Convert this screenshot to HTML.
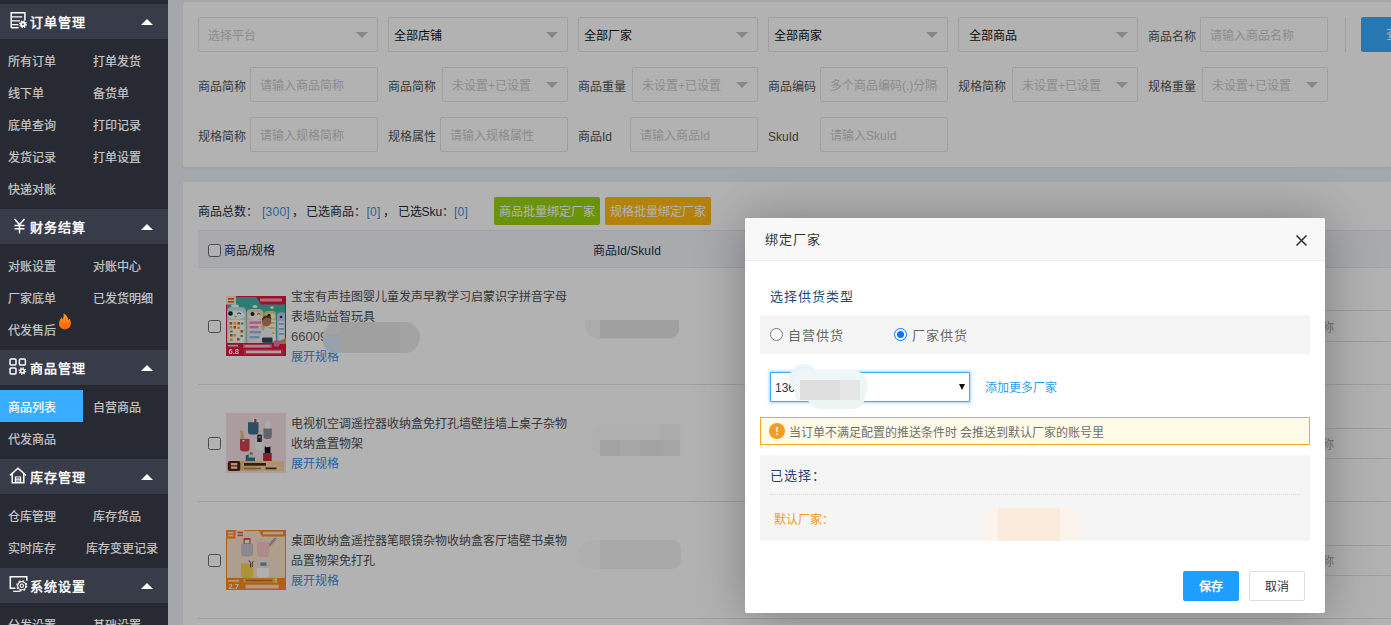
<!DOCTYPE html>
<html lang="zh-CN">
<head>
<meta charset="utf-8">
<title>商品列表</title>
<style>
*{box-sizing:border-box;margin:0;padding:0}
html,body{width:1391px;height:625px;overflow:hidden}
body{position:relative;background:#ebf1f6;font-family:"Liberation Sans",sans-serif;font-size:12px;color:#555}
.abs{position:absolute}
/* ---------- sidebar ---------- */
#side{position:absolute;left:0;top:0;width:168px;height:625px;background:#272933;z-index:50;overflow:hidden}
.sh{position:absolute;left:0;width:168px;height:35px;background:#383b48;color:#fff;font-size:14px;-webkit-text-stroke:.45px #fff;line-height:37px}
.sh span{position:absolute;left:29.500px;top:0;white-space:nowrap;font-size:13px;letter-spacing:1px}
.sh svg{position:absolute}
.sh i{position:absolute;left:141px;top:15px;width:0;height:0;border-left:6px solid transparent;border-right:6px solid transparent;border-bottom:6px solid #fff}
.si{position:absolute;height:32px;line-height:36px;-webkit-text-stroke:.2px #c9c9c9;color:#c9c9c9;font-size:12px;white-space:nowrap}
.si.c1{left:8px}.si.c2{left:93px}
.si.act{left:0;width:83px;padding-left:8px;background:#38adff;color:#fff;-webkit-text-stroke:.2px #fff}
/* ---------- main ---------- */
#main{position:absolute;left:168px;top:0;width:1223px;height:625px;overflow:hidden}
.panel{position:absolute;background:#fff;border-radius:2px}
.lab{position:absolute;height:35px;line-height:40px;color:#555;font-size:12px;white-space:nowrap}
.inp{position:absolute;height:35px;border:1px solid #e6e6e6;border-radius:2px;background:#fff;line-height:37px;padding-left:9px;color:#cacaca;font-size:12px;white-space:nowrap;overflow:hidden}
.inp.v{color:#111;padding-left:5px}
.inp.s:after{content:"";position:absolute;right:9px;top:14px;border-left:6px solid transparent;border-right:6px solid transparent;border-top:6px solid #c2c2c2}
.tb{top:197px;height:28px;line-height:31px;color:#1c2a44;white-space:nowrap}
.tb.b{color:#3a8ee6;letter-spacing:.25px}
.btn{position:absolute;top:197px;width:106px;height:28px;line-height:30px;border-radius:2px;color:#fff;font-size:12px;text-align:center;white-space:nowrap}
.th{height:38px;line-height:42px;color:#1f2d4d;font-size:12px;white-space:nowrap}
.cb{position:absolute;width:13px;height:13px;border:1px solid #6b6b6b;border-radius:2.500px;background:#fff}
.pt{margin-top:1px;line-height:20px;color:#505050;font-size:12px;white-space:nowrap}
.lk{color:#3a8ee6}
.hl{left:30px;width:1285px;height:1px;background:#e1e4ee}
.rl{left:1150px;width:80px;height:1px;background:#e2e4ea}
.rc{left:1154px;height:16px;line-height:20px;color:#a6a6a6;font-size:12px}
#shade{position:absolute;left:168px;top:0;width:1223px;height:625px;background:#000;opacity:.3;z-index:60}
#dlg{position:absolute;left:745px;top:218px;width:580px;height:395px;background:#fff;border-radius:2px;box-shadow:1px 1px 50px rgba(0,0,0,.3);z-index:70}
.rd{width:13px;height:13px;border:1px solid #767676;border-radius:7px;background:#fff}
.rd.on{border-color:#0075ff}
.rd.on:after{content:"";position:absolute;left:2px;top:2px;width:7px;height:7px;border-radius:4px;background:#0075ff}
.rt{height:39px;line-height:42px;font-size:13px;letter-spacing:1px;color:#666;white-space:nowrap}
</style>
</head>
<body>

<div id="side">
  <div class="sh" style="top:4px"><svg style="left:10px;top:8px" width="18" height="18" viewBox="0 0 18 18" fill="none" stroke="#fff" stroke-width="1.5"><path d="M1.2 15.7V.75h13.700v7.800"/><path d="M1.2 15.700h7.400"/><path d="M1.500 4.900h10.800M1.500 8.800h8.500M1.500 12.600h7" stroke-width="1.300"/><circle cx="13" cy="12.200" r="1.900" stroke-width="1.900"/><circle cx="13" cy="12.200" r="3.300" stroke-width="1.300" stroke-dasharray="1.300 1.292"/></svg><span>订单管理</span><i></i></div>
  <div class="si c1" style="top:44px">所有订单</div><div class="si c2" style="top:44px">打单发货</div>
  <div class="si c1" style="top:76px">线下单</div><div class="si c2" style="top:76px">备货单</div>
  <div class="si c1" style="top:108px">底单查询</div><div class="si c2" style="top:108px">打印记录</div>
  <div class="si c1" style="top:140px">发货记录</div><div class="si c2" style="top:140px">打单设置</div>
  <div class="si c1" style="top:172px">快递对账</div>

  <div class="sh" style="top:209px"><svg style="left:13px;top:9px" width="13" height="16" viewBox="0 0 13 16" fill="none" stroke="#fff" stroke-width="1.5"><path d="M1.5 1l5 5.6 5-5.6M6.5 6.6V15.5M1.5 7.4h10M1.5 10.8h10"/></svg><span>财务结算</span><i></i></div>
  <div class="si c1" style="top:249px">对账设置</div><div class="si c2" style="top:249px">对账中心</div>
  <div class="si c1" style="top:281px">厂家底单</div><div class="si c2" style="top:281px">已发货明细</div>
  <div class="si c1" style="top:313px">代发售后</div>
  <svg class="abs" style="left:59px;top:312.500px" width="13" height="17" viewBox="0 0 13 17"><defs><linearGradient id="fg" x1="0" y1="0" x2="0" y2="1"><stop offset="0" stop-color="#ffa42a"/><stop offset=".55" stop-color="#ff7a16"/><stop offset="1" stop-color="#ff5e0e"/></linearGradient></defs><path d="M4.500 .300C7.500 2 9 4.500 9.300 7c.500-.500.900-1 1.100-1.600 1.100 1.600 1.500 3.600 1.500 5.200 0 3.400-2.700 5.800-6 5.800S0 14 0 10.800c0-2.300 1.200-4.300 2.400-6.600.400 1 .800 1.600 1.500 2 .700-2 1-4 .600-5.900z" fill="url(#fg)"/></svg>

  <div class="sh" style="top:350px"><svg style="left:9px;top:8px" width="18" height="17" viewBox="0 0 18 17" fill="none" stroke="#fff" stroke-width="1.5"><rect x="1" y="1" width="6" height="6" rx="1"/><rect x="10.400" y="1" width="6" height="6" rx="1"/><rect x="1" y="10" width="6" height="6" rx="1"/><circle cx="13.400" cy="13" r="1.900" stroke-width="1.500"/><circle cx="13.400" cy="13" r="3.200" stroke-width="1.300" stroke-dasharray="1.200 1.310"/></svg><span>商品管理</span><i></i></div>
  <div class="si act" style="top:390px">商品列表</div><div class="si c2" style="top:390px">自营商品</div>
  <div class="si c1" style="top:422px">代发商品</div>

  <div class="sh" style="top:459px"><svg style="left:9px;top:8px" width="18" height="17" viewBox="0 0 18 17" fill="none" stroke="#fff" stroke-width="1.500"><path d="M1 8.400L9 1.200l8 7.200"/><path d="M3.200 7v8.800h11.600V7"/><path d="M6.400 15.400v-5.400h5.200v5.400M6.400 12.200h5.200M6.400 14h5.200" stroke-width="1.200"/></svg><span>库存管理</span><i></i></div>
  <div class="si c1" style="top:499px">仓库管理</div><div class="si c2" style="top:499px">库存货品</div>
  <div class="si c1" style="top:531px">实时库存</div><div class="si" style="left:86px;top:531px">库存变更记录</div>

  <div class="sh" style="top:568px"><svg style="left:9px;top:7px" width="20" height="18" viewBox="0 0 20 18" fill="none" stroke="#fff" stroke-width="1.500"><path d="M6.500 13.300H1.300V1.800h16.500v4"/><path d="M4 16.300h7.500" stroke-width="1.200"/><circle cx="12.800" cy="10.700" r="5" stroke-width="1.100" stroke-dasharray="1.900 2.027"/><circle cx="12.800" cy="10.700" r="4.100" stroke-width="1.100"/><circle cx="12.800" cy="10.700" r="1.700" stroke-width="1.100"/></svg><span>系统设置</span><i></i></div>
  <div class="si c1" style="top:608px">分发设置</div><div class="si c2" style="top:608px">基础设置</div>
</div>

<div id="main">
  <!-- filter panel : coords relative to #main (x-168) -->
  <div class="panel" style="left:15px;top:2px;width:1300px;height:165px;box-shadow:0 1px 2px rgba(0,0,0,.05)"></div>

  <!-- row 1 -->
  <div class="inp s" style="left:30px;top:17px;width:180px">选择平台</div>
  <div class="inp s v" style="left:220px;top:17px;width:180px">全部店铺</div>
  <div class="inp s v" style="left:410px;top:17px;width:180px">全部厂家</div>
  <div class="inp s v" style="left:600px;top:17px;width:180px">全部商家</div>
  <div class="inp s v" style="left:790px;top:17px;width:180px;padding-left:10px">全部商品</div>
  <div class="lab" style="left:980px;top:17px">商品名称</div>
  <div class="inp" style="left:1032px;top:17px;width:128px">请输入商品名称</div>
  <div class="abs" style="left:1177px;top:17px;width:1px;height:35px;background:#e6e6e6"></div>
  <div class="abs" style="left:1193px;top:17px;width:60px;height:35px;background:#38adff;border-radius:2px;color:#fff;font-size:14px;line-height:35px;padding-left:25px;white-space:nowrap">查询</div>

  <!-- row 2 -->
  <div class="lab" style="left:30px;top:67px">商品简称</div>
  <div class="inp" style="left:82px;top:67px;width:128px">请输入商品简称</div>
  <div class="lab" style="left:220px;top:67px">商品简称</div>
  <div class="inp s" style="left:274px;top:67px;width:126px">未设置+已设置</div>
  <div class="lab" style="left:410px;top:67px">商品重量</div>
  <div class="inp s" style="left:464px;top:67px;width:126px">未设置+已设置</div>
  <div class="lab" style="left:600px;top:67px">商品编码</div>
  <div class="inp" style="left:652px;top:67px;width:128px">多个商品编码(,)分隔</div>
  <div class="lab" style="left:790px;top:67px">规格简称</div>
  <div class="inp s" style="left:844px;top:67px;width:126px">未设置+已设置</div>
  <div class="lab" style="left:980px;top:67px">规格重量</div>
  <div class="inp s" style="left:1034px;top:67px;width:126px">未设置+已设置</div>

  <!-- row 3 -->
  <div class="lab" style="left:30px;top:117px">规格简称</div>
  <div class="inp" style="left:82px;top:117px;width:128px">请输入规格简称</div>
  <div class="lab" style="left:220px;top:117px">规格属性</div>
  <div class="inp" style="left:272px;top:117px;width:128px">请输入规格属性</div>
  <div class="lab" style="left:410px;top:117px">商品Id</div>
  <div class="inp" style="left:462px;top:117px;width:128px">请输入商品Id</div>
  <div class="lab" style="left:600px;top:117px">SkuId</div>
  <div class="inp" style="left:652px;top:117px;width:128px">请输入SkuId</div>


  <!-- table panel : coords relative to #main (x-168) -->
  <div class="panel" style="left:15px;top:182px;width:1300px;height:460px"></div>
  <div class="abs tb" style="left:30px">商品总数：</div><div class="abs tb b" style="left:94px">[300]</div><div class="abs tb" style="left:124px">，</div>
  <div class="abs tb" style="left:138px">已选商品：</div><div class="abs tb b" style="left:198.500px">[0]</div><div class="abs tb" style="left:215px">，</div>
  <div class="abs tb" style="left:229.500px">已选Sku：</div><div class="abs tb b" style="left:286px">[0]</div>
  <div class="btn" style="left:326px;background:#9ad30e">商品批量绑定厂家</div>
  <div class="btn" style="left:437px;background:#ffbb10">规格批量绑定厂家</div>

  <div class="abs" style="left:30px;top:230px;width:1285px;height:38px;background:#f2f4fa;border-top:1px solid #e6e9f0;border-bottom:1px solid #e6e9f0"></div>
  <div class="cb" style="left:40px;top:244px"></div>
  <div class="abs th" style="left:56px;top:230px">商品/规格</div>
  <div class="abs th" style="left:425px;top:230px">商品Id/SkuId</div>

  <!-- row 1 : 268-384 -->
  <div class="cb" style="left:40px;top:320px"></div>
  <svg class="abs" style="left:58px;top:296px" width="60" height="60" viewBox="0 0 60 60">
    <defs><filter id="bl" x="-5%" y="-5%" width="110%" height="110%"><feGaussianBlur stdDeviation=".45"/></filter><clipPath id="cp"><rect width="60" height="60"/></clipPath></defs>
    <g clip-path="url(#cp)"><g filter="url(#bl)">
    <rect x="-2" y="-2" width="64" height="64" fill="#e3163f"/>
    <rect x="1" y="1" width="58" height="47" fill="#43b2a3"/>
    <path d="M29 -1h32v9.500H35z" fill="#e3163f"/>
    <rect x="34" y="2.500" width="22" height="3" fill="#f4a3b3"/>
    <rect x="0" y="0" width="10" height="8.500" fill="#fbe6c6"/><rect x="2" y="2" width="6" height="1.600" fill="#e0563c"/><rect x="2" y="5" width="6" height="1.600" fill="#e0563c"/>
    <ellipse cx="9" cy="10" rx="4" ry="1.800" fill="#eef8f6"/><ellipse cx="29" cy="10.500" rx="2.500" ry="1.500" fill="#eef8f6"/><ellipse cx="46" cy="11.500" rx="2" ry="1.200" fill="#eef8f6"/>
    <path d="M1 48V16q0-5 5-5h9q5 0 5 5v32z" fill="#bfe2ee"/>
    <path d="M20.500 48V18q0-5 4.500-5h8q4.500 0 4.500 5v30z" fill="#f6d6b6"/>
    <path d="M38 46V19q0-4 3.500-4h5q3.500 0 3.500 4v27z" fill="#f2d36a"/>
    <path d="M51 45V20q0-3.500 3-3.500h5V45z" fill="#b5d0ee"/>
    <ellipse cx="10.500" cy="19" rx="8.500" ry="4.500" fill="#f4fbfd"/>
    <ellipse cx="29" cy="20" rx="7" ry="4" fill="#fdf3ea"/>
    <ellipse cx="44.500" cy="20.500" rx="4.500" ry="3" fill="#fdf7df"/>
    <circle cx="4.500" cy="17.500" r="2.300" fill="#1d1d22"/><path d="M11 18q2-2.500 4 0" stroke="#333" stroke-width=".9" fill="none"/><path d="M8 20l1.500 2 1.500-2z" fill="#f2a93b"/>
    <circle cx="26.500" cy="18" r="2" fill="#1d1d22"/><path d="M31 18.500q1.700-2 3.400 0" stroke="#333" stroke-width=".8" fill="none"/>
    <circle cx="43" cy="19.500" r="1.700" fill="#1d1d22"/><circle cx="55" cy="21" r="1.300" fill="#333"/>
    <rect x="2.500" y="24" width="16" height="23.500" fill="#fcfcf4"/>
    <rect x="22.500" y="24" width="13.500" height="23" fill="#fbe4f0"/>
    <rect x="39.500" y="24" width="10" height="21" fill="#fcf9e2"/>
    <rect x="52.500" y="25" width="6" height="19" fill="#eef4fb"/>
    <g fill="#e5533f"><rect x="3.500" y="26" width="2.600" height="2.600"/><rect x="11.500" y="26" width="2.600" height="2.600"/><rect x="7.500" y="30" width="2.600" height="2.600"/><rect x="14.500" y="34" width="2.600" height="2.600"/><rect x="4" y="38" width="2.600" height="2.600"/><rect x="11" y="42" width="2.600" height="2.600"/></g>
    <g fill="#f1b32e"><rect x="7.500" y="26" width="2.600" height="2.600"/><rect x="3.500" y="30" width="2.600" height="2.600"/><rect x="11.500" y="30.500" width="2.600" height="2.600"/><rect x="7.500" y="38" width="2.600" height="2.600"/><rect x="4" y="42.500" width="2.600" height="2.600"/></g>
    <g fill="#5bb04f"><rect x="15" y="26.500" width="2.400" height="2"/><rect x="4" y="34.500" width="2.600" height="2"/><rect x="14.500" y="39" width="2.400" height="2"/></g>
    <g fill="#ef84b5"><rect x="23.500" y="25.500" width="11.500" height="2.400"/><rect x="23.500" y="30" width="9" height="2.400"/></g>
    <g fill="#84c3ea"><rect x="23.500" y="35" width="11.500" height="2.400"/><rect x="23.500" y="40" width="10" height="2.400"/></g>
    <g fill="#f2c86a"><rect x="40.500" y="26" width="8" height="2"/><rect x="40.500" y="31" width="8" height="2"/><rect x="40.500" y="36" width="8" height="2"/></g>
    <g fill="#8fb5e6"><rect x="53" y="27" width="5" height="1.800"/><rect x="53" y="32" width="5" height="1.800"/><rect x="53" y="37" width="5" height="1.800"/></g>
    <path d="M47 48l13-6v6z" fill="#c99b69"/>
    <ellipse cx="40.500" cy="25.500" rx="4.800" ry="5" fill="#b9805f"/><path d="M36 25q0-5.500 5-5.500 4.500 0 4.500 4-3-2.500-6-1.500-2 1-3.500 3z" fill="#6b3f2a"/>
    <path d="M34.500 45q0-14 6-14 6.500 0 6.500 14z" fill="#eef1f5"/><path d="M37.500 35l-3-5 1.200-.8 3 4z" fill="#e9c3a6"/>
    <rect x="36" y="41.500" width="10.500" height="5" rx="1" fill="#3c4252"/>
    <circle cx="50.500" cy="47.500" r="3.300" fill="#ef6fa5"/>
    <rect x="-1" y="47" width="49" height="14" fill="#e3163f"/><rect x="47" y="51" width="14" height="10" fill="#e3163f"/>
    <rect x="2" y="48.800" width="10" height="1.800" fill="#f7b4c0"/>
    <rect x="17" y="48.300" width="29" height="3.700" fill="#f06683"/><rect x="19" y="49.200" width="25" height="1.900" fill="#f9c9d3"/>
    <rect x="18" y="53.300" width="39" height="5" fill="#ea3f60"/><rect x="20" y="54.600" width="35" height="2.600" fill="#fbe3e8"/>
    <text x="2.500" y="58.300" font-family="Liberation Sans, sans-serif" font-size="7.500" font-weight="bold" fill="#fff">6.8</text>
    </g></g>
  </svg>
  <div class="abs pt" style="left:123px;top:286px">宝宝有声挂图婴儿童发声早教学习启蒙识字拼音字母<br>表墙贴益智玩具<br><span style="color:#666;font-size:13px">66009</span><br><span class="lk">展开规格</span></div>
  <div class="abs" style="left:154.500px;top:322px;width:97px;height:31px;border-radius:14px 16px 16px 12px;background:#eaeaea"></div>
  <div class="abs" style="left:154.500px;top:334px;width:18px;height:19px;border-radius:6px 0 0 12px;background:#d9e5f6"></div>
  <div class="abs" style="left:172px;top:322px;width:60px;height:31px;background:#e5e5e5"></div>
  <div class="abs" style="left:417px;top:320px;width:94px;height:18.500px;border-radius:0 0 10px 14px;background:#f5f5f5"></div>
  <div class="abs" style="left:431.500px;top:320px;width:79.500px;height:18px;border-radius:0 0 9px 0;background:#e6e6e6"></div>
  <div class="abs hl" style="top:384px"></div>

  <!-- row 2 : 385-501 -->
  <div class="cb" style="left:40px;top:437px"></div>
  <svg class="abs" style="left:58px;top:413px" width="60" height="60" viewBox="0 0 60 60">
    <g clip-path="url(#cp)"><g filter="url(#bl)">
    <rect x="-2" y="-2" width="64" height="64" fill="#f5e1e4"/>
    <rect x="26.500" y="5" width="2" height="7" rx=".8" fill="#fafafa"/><rect x="28.300" y="6" width="2" height="5" rx=".6" fill="#cf2a3f"/><path d="M31 11.500l3.200-6 .9.600-2.600 6z" fill="#f4f4f4"/>
    <path d="M22 9.300h10.500v9.200q0 3-3 3h-4.500q-3 0-3-3z" fill="#3d6f8b"/>
    <ellipse cx="41.800" cy="12.500" rx="2.600" ry="5.300" fill="#f6f6f7"/>
    <path d="M37.400 15.600h8.400v7.400q0 3-3 3h-2.400q-3 0-3-3z" fill="#8c8e9c"/>
    <path d="M14.300 17l3 1.500 1.500 10h-4.500z" fill="#dfc08a"/>
    <path d="M14 26h9.500v9.400q0 3-3 3h-3.500q-3 0-3-3z" fill="#cf4252"/><rect x="16.500" y="27" width="2" height="1.500" fill="#f3f3f3"/>
    <rect x="31.200" y="21.400" width="4.600" height="8" rx="1" fill="#2b2b31"/><rect x="32.300" y="23" width="2.400" height="2.400" fill="#8d8d95"/>
    <path d="M29.400 29h8.200v5.600q0 2.800-2.800 2.800h-2.600q-2.800 0-2.800-2.800z" fill="#f2f2f4"/>
    <rect x="38.700" y="33" width="5.700" height="9" rx=".8" fill="#111114"/><rect x="39.500" y="32.400" width="4.200" height="1.700" fill="#f1f1f1"/>
    <path d="M37.100 40h8.600v8h-8.600z" fill="#c32f3d"/>
    <rect x="22.700" y="38" width="5.100" height="6.500" rx=".6" fill="#e9e3d4"/><rect x="23.800" y="39.500" width="3" height="2" fill="#7c8088"/>
    <path d="M19.700 42.500l3-1.300v3.300h6.300v4H19.700z" fill="#3d6f8b"/>
    <rect x="1.800" y="47.900" width="56.100" height="10" rx="2" fill="#f3c48b"/><rect x="30" y="47.900" width="27.900" height="10" rx="2" fill="#f7d3a3"/>
    <rect x="1.800" y="47.900" width="12.500" height="10" rx="2.200" fill="#57200c"/>
    <rect x="4.800" y="50" width="6.500" height="2.400" fill="#f3d7b0"/><rect x="4.800" y="53.400" width="6.500" height="2.400" fill="#f3d7b0"/>
    <rect x="18" y="50" width="22" height="2.700" fill="#4a2a18"/>
    <rect x="18" y="54.700" width="17" height="1.500" fill="#a07c54"/><rect x="39.500" y="54.500" width="11" height="1.800" fill="#57331b"/>
    </g></g>
  </svg>
  <div class="abs pt" style="left:123px;top:413px">电视机空调遥控器收纳盒免打孔墙壁挂墙上桌子杂物<br>收纳盒置物架<br><span class="lk">展开规格</span></div>
  <div class="abs" style="left:423px;top:424px;width:89.500px;height:32px;border-radius:15px 0 0 15px;background:#fcfcfc"></div>
  <div class="abs" style="left:492px;top:424px;width:20px;height:16px;background:#f6f6f6"></div>
  <div class="abs" style="left:432px;top:440px;width:20px;height:16px;background:#e9e9e7"></div><div class="abs" style="left:452px;top:440px;width:20px;height:16px;background:#efefef"></div>
  <div class="abs" style="left:472px;top:440px;width:20px;height:16px;background:#e9e9e9"></div><div class="abs" style="left:492px;top:440px;width:20px;height:16px;background:#ededed"></div>
  <div class="abs hl" style="top:501px"></div>

  <!-- row 3 : 502-618 -->
  <div class="cb" style="left:40px;top:554px"></div>
  <svg class="abs" style="left:58px;top:530px" width="60" height="60" viewBox="0 0 60 60">
    <g clip-path="url(#cp)"><g filter="url(#bl)">
    <rect x="-2" y="-2" width="64" height="64" fill="#ff8a1f"/>
    <rect x="1" y="1" width="58" height="47.500" fill="#fbe2cc"/>
    <rect x="-1" y="-1" width="10.500" height="9.500" fill="#ff8a1f"/><rect x="2" y="2" width="5.500" height="1.600" fill="#ffe6c9"/><rect x="2" y="4.800" width="5.500" height="1.600" fill="#ffe6c9"/>
    <rect x="10" y="0" width="8.500" height="8" fill="#ffe8c6"/><rect x="11.500" y="1.800" width="5.500" height="1.600" fill="#e8573c"/><rect x="11.500" y="4.600" width="5.500" height="1.600" fill="#e8573c"/>
    <path d="M32 -1h29v7.500H36z" fill="#ff8a1f"/><rect x="37" y="1.800" width="20" height="2.600" fill="#ffe1c0"/>
    <rect x="17.500" y="7.900" width="7.100" height="8" rx=".8" fill="#dc4349"/><rect x="18.700" y="9.800" width="4.700" height="3.600" fill="#f4f0f0"/>
    <path d="M15 13.700h12.100v9q0 3.800-3.800 3.800h-4.500q-3.800 0-3.800-3.800z" fill="#c9c3cd"/>
    <path d="M42 15.600l7-8" stroke="#5aa8e0" stroke-width="1"/><path d="M43 16.200l7-8" stroke="#e5537a" stroke-width="1"/><path d="M44 16.800l7-8" stroke="#efc13f" stroke-width="1"/>
    <path d="M31 11.800h12.100v11.500q0 3.800-3.800 3.800h-4.500q-3.800 0-3.800-3.800z" fill="#f6c8c3"/>
    <path d="M15 33.500h12.100v10.600q0 3.800-3.800 3.800h-4.500q-3.800 0-3.800-3.800z" fill="#f6d152"/>
    <path d="M22.500 31q2-1 2 2.500v4M27.500 31q-2 1-1.200 6" stroke="#3a3a3a" stroke-width=".8" fill="none"/>
    <rect x="32.300" y="29.700" width="10.200" height="9.500" rx="1.200" fill="#e7e7ec"/><rect x="34.300" y="32.500" width="6.200" height="3.200" fill="#858a98"/>
    <path d="M31 38h12.100v6.100q0 3.800-3.800 3.800h-4.500q-3.800 0-3.800-3.800z" fill="#fcfcfc"/>
    <rect x="-1" y="47.900" width="62" height="13.100" fill="#ff8a1f"/>
    <rect x="2.200" y="50" width="11" height="1.800" fill="#ffd6a8"/>
    <rect x="17.500" y="48.500" width="32.700" height="3.900" fill="#ffc24c"/><rect x="19.500" y="49.500" width="27" height="1.900" fill="#b8741e"/><rect x="49" y="48" width="2.200" height="4.800" fill="#ffe14a"/>
    <rect x="19.500" y="54.700" width="33.200" height="3.800" fill="#ffdcb6"/>
    <text x="2.500" y="58.600" font-family="Liberation Sans, sans-serif" font-size="7.500" font-weight="bold" fill="#fff">2.7</text>
    </g></g>
  </svg>
  <div class="abs pt" style="left:123px;top:530px">桌面收纳盒遥控器笔眼镜杂物收纳盒客厅墙壁书桌物<br>品置物架免打孔<br><span class="lk">展开规格</span></div>
  <div class="abs" style="left:409.500px;top:540px;width:103px;height:29px;border-radius:15px 9px 10px 15px;background:#fbfbfb"></div>
  <div class="abs" style="left:432px;top:540px;width:80.500px;height:29px;border-radius:0 9px 10px 0;background:#f2f2f2"></div>
  <div class="abs hl" style="top:618px"></div>

  <!-- right column peeking out behind the dialog -->
  <div class="abs rl" style="top:310px"></div><div class="abs rl" style="top:341px"></div>
  <div class="abs rl" style="top:428px"></div><div class="abs rl" style="top:458px"></div>
  <div class="abs rl" style="top:545px"></div><div class="abs rl" style="top:575px"></div>
  <div class="abs rc" style="top:318px">称</div><div class="abs rc" style="top:435px">称</div><div class="abs rc" style="top:552px">称</div>

</div>

<div id="shade"></div>


<!-- dialog : 745-1325 x 218-613 -->
<div id="dlg">
  <div class="abs" style="left:0;top:0;width:580px;height:43px;background:#f8f8f8;border-bottom:1px solid #eee;border-radius:2px 2px 0 0"></div>
  <div class="abs" style="left:20px;top:0;height:42px;line-height:43px;font-size:13px;letter-spacing:1px;color:#333;white-space:nowrap">绑定厂家</div>
  <svg class="abs" style="left:549.500px;top:15.500px" width="13" height="13" viewBox="0 0 13 13"><path d="M1.500 1.500l10 10M11.500 1.500l-10 10" stroke="#2a2a3a" stroke-width="1.500" fill="none"/></svg>

  <div class="abs" style="left:25px;top:68px;height:20px;line-height:21px;font-size:13px;letter-spacing:1px;color:#1a4d75;white-space:nowrap">选择供货类型</div>

  <div class="abs" style="left:15px;top:97px;width:550px;height:39px;background:#f5f5f5"></div>
  <div class="abs rd" style="left:25px;top:110px"></div>
  <div class="abs rt" style="left:42.500px;top:97px">自营供货</div>
  <div class="abs rd on" style="left:149px;top:110px"></div>
  <div class="abs rt" style="left:166.500px;top:97px">厂家供货</div>

  <div class="abs" style="left:25px;top:154px;width:200px;height:30px;border:1px solid #40a9ff;border-radius:1px;background:#fff;box-shadow:0 0 3px 1px rgba(64,169,255,.5)"></div>
  <div class="abs" style="left:30px;top:154px;height:30px;line-height:33px;font-size:12px;color:#333">136</div>
  <div class="abs" style="left:44px;top:146px;width:30px;height:30px;border-radius:15px;background:#eaf4fb"></div>
  <div class="abs" style="left:50px;top:152px;width:73px;height:30px;border-radius:6px 16px 14px 4px;background:#eff6f8"></div>
  <div class="abs" style="left:62px;top:172px;width:58px;height:19px;border-radius:4px 4px 12px 14px;background:#edf4f4"></div>
  <div class="abs" style="left:55px;top:162px;width:40px;height:20px;background:#dedede"></div>
  <div class="abs" style="left:95px;top:162px;width:20px;height:20px;background:#e6e6e6"></div>
  <div class="abs" style="left:214px;top:166px;width:0;height:0;border-left:3.500px solid transparent;border-right:3.500px solid transparent;border-top:6px solid #111"></div>
  <div class="abs" style="left:239.500px;top:159px;height:20px;line-height:22px;font-size:12px;color:#2a9fea;white-space:nowrap">添加更多厂家</div>

  <div class="abs" style="left:15px;top:199px;width:550px;height:28px;background:#fffbe6;border:1px solid #f6a821"></div>
  <div class="abs" style="left:24px;top:205px;width:16px;height:16px;border-radius:8px;background:#f59a23;color:#fff;font-size:11px;font-weight:bold;line-height:16px;text-align:center">!</div>
  <div class="abs" style="left:44px;top:199px;height:28px;line-height:33px;font-size:12px;color:#6e6e6e;white-space:nowrap">当订单不满足配置的推送条件时 会推送到默认厂家的账号里</div>

  <div class="abs" style="left:15px;top:237px;width:550px;height:86px;background:#f5f5f5"></div>
  <div class="abs" style="left:25px;top:247px;height:20px;line-height:21px;font-size:13px;letter-spacing:1px;color:#1d4971;white-space:nowrap">已选择：</div>
  <div class="abs" style="left:25px;top:276px;width:530px;height:0;border-top:1px dotted #dcdcdc"></div>
  <div class="abs" style="left:29px;top:290px;height:20px;line-height:24px;font-size:12px;color:#f59a23;white-space:nowrap">默认厂家：</div>
  <div class="abs" style="left:237px;top:290px;width:100px;height:33px;border-radius:16px 16px 0 0;background:#fbf3ec"></div>
  <div class="abs" style="left:253px;top:290px;width:62px;height:33px;background:#fbebdd"></div>

  <div class="abs" style="left:438px;top:353px;width:56px;height:30px;line-height:32px;background:#1e9fff;border-radius:2px;color:#fff;font-size:12px;font-weight:bold;text-align:center">保存</div>
  <div class="abs" style="left:504px;top:353px;width:56px;height:30px;line-height:30px;background:#fff;border:1px solid #dedede;border-radius:2px;color:#333;font-size:12px;text-align:center">取消</div>
</div>


</body>
</html>
